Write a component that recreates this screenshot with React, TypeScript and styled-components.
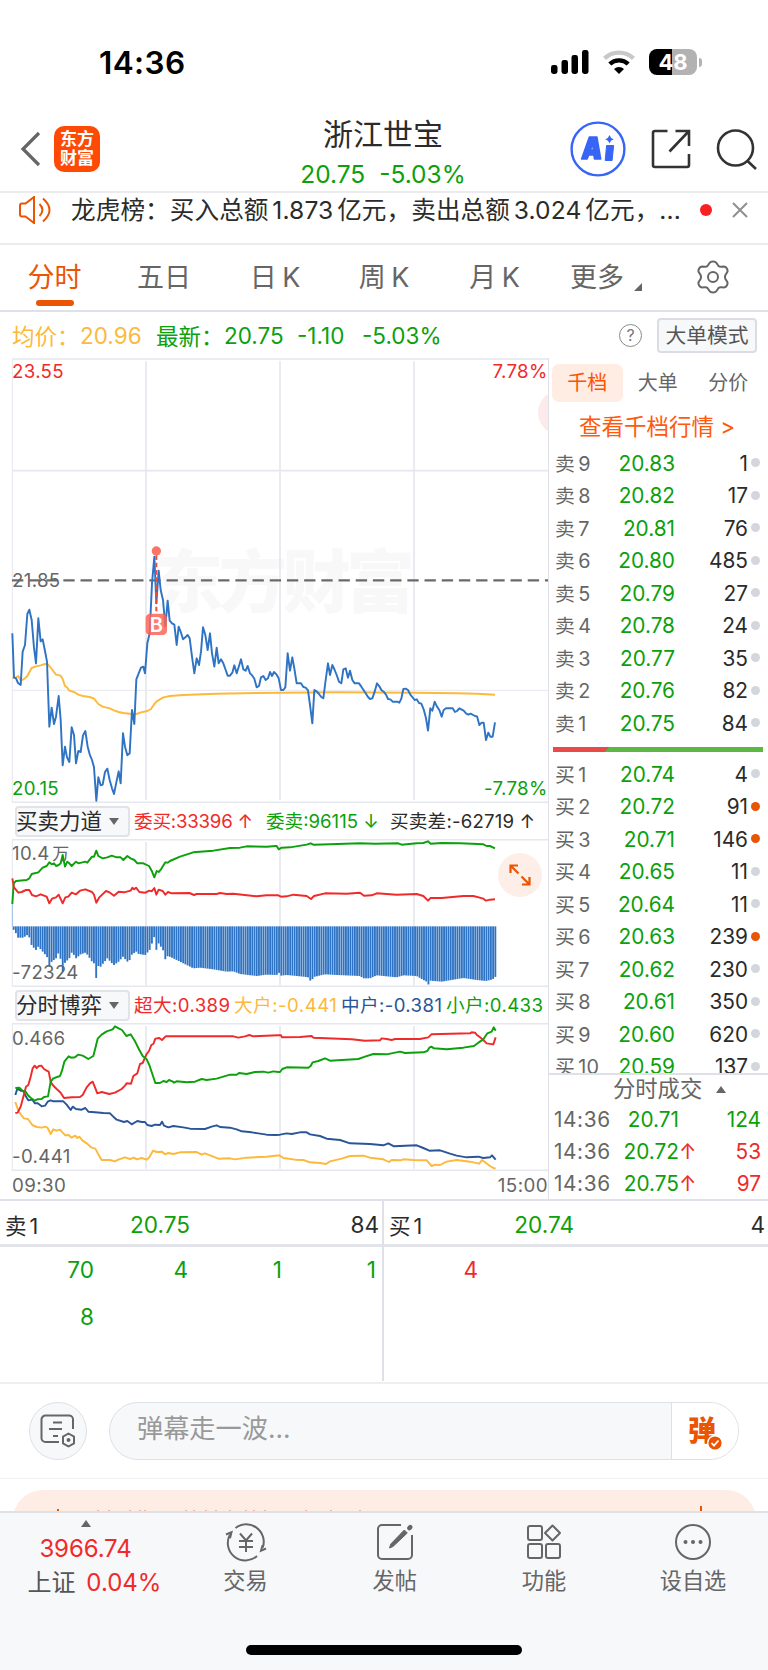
import React from "react";
import styled, { createGlobalStyle } from "styled-components";

const RED = "#f02a2a";
const GREEN = "#0ca00c";
const ORANGE = "#ea5504";
const AMBER = "#fcb93c";
const NAVY = "#2a5597";
const BLUE = "#2f74c4";
const INK = "#2b2b2b";
const GREY = "#666666";
const LINE = "#dfe0e8";

const Global = createGlobalStyle`
  * { box-sizing: border-box; }
  body { margin: 0; background: #fff; }
  svg { display: block; flex: none; }
`;

const Screen = styled.div`
  width: 768px;
  height: 1670px;
  overflow: hidden;
  display: flex;
  flex-direction: column;
  background: #fff;
  color: ${INK};
  font-family: Inter, "Noto Sans CJK SC", sans-serif;
  white-space: nowrap;
`;

/* ---------- status bar ---------- */

const StatusBar = styled.div`
  height: 106px;
  padding: 43px 66px 0 99px;
  display: flex;
  justify-content: space-between;
  align-items: flex-start;
`;
const Clock = styled.div`
  font-size: 31.5px;
  line-height: 40px;
  font-weight: 600;
  color: #000;
  letter-spacing: 0.4px;
`;
const StatusIcons = styled.div`
  display: flex;
  align-items: center;
  gap: 14px;
  height: 38px;
`;
const Battery = styled.div`
  display: flex;
  align-items: center;
  gap: 2px;
`;
const BatteryBody = styled.div`
  width: 48px;
  height: 26px;
  border-radius: 8px;
  background: linear-gradient(90deg, #000 48%, #b2b2b2 48%);
  color: #fff;
  font-size: 22px;
  font-weight: 700;
  line-height: 26px;
  text-align: center;
`;
const BatteryNub = styled.div`
  width: 3px;
  height: 9px;
  border-radius: 0 3px 3px 0;
  background: #b2b2b2;
`;

/* ---------- header ---------- */

const Header = styled.header`
  height: 87px;
  display: grid;
  grid-template-columns: 283px 200px 1fr;
  grid-template-rows: 85px;
  border-bottom: 2px solid #ececee;
`;
const HeaderLeft = styled.div`
  display: flex;
  align-items: center;
  padding-left: 20px;
  gap: 13px;
`;
const Logo = styled.div`
  width: 46px;
  height: 46px;
  border-radius: 10px;
  background: #ff4a05;
  color: #fff;
  font-size: 17px;
  line-height: 19px;
  font-weight: 700;
  text-align: center;
  padding-top: 4px;
`;
const HeaderTitle = styled.div`
  display: flex;
  flex-direction: column;
  align-items: center;
`;
const StockName = styled.div`
  margin-top: 8px;
  font-size: 30px;
  line-height: 40px;
`;
const StockQuote = styled.div`
  font-size: 24.5px;
  line-height: 40px;
  color: ${GREEN};
  word-spacing: 7px;
`;
const HeaderRight = styled.div`
  display: flex;
  align-items: center;
  padding-left: 87px;
`;
const ShareIcon = styled.svg`
  margin-left: 24.5px;
`;
const SearchIcon = styled.svg`
  margin-left: 25px;
`;

/* ---------- ticker ---------- */

const Ticker = styled.div`
  height: 52px;
  padding: 0 19px 17px;
  display: flex;
  align-items: center;
  border-bottom: 2px solid #ececee;
`;
const TickerText = styled.div`
  width: 629px;
  flex: none;
  margin-left: 19px;
  font-size: 24.6px;
  line-height: 30px;
  letter-spacing: 0.1px;
  word-spacing: -3.2px;
`;
const TickerDot = styled.i`
  flex: none;
  width: 12px;
  height: 12px;
  border-radius: 50%;
  background: #f82020;
  margin-right: 20px;
`;

/* ---------- period tabs ---------- */

const Tabs = styled.nav`
  height: 67px;
  display: flex;
  border-bottom: 2px solid ${LINE};
`;
const Tab = styled.div<{ $w: number; $active?: boolean }>`
  width: ${(p) => p.$w}px;
  height: 65px;
  display: flex;
  flex-direction: column;
  align-items: center;
  padding-top: 13px;
  font-size: 27px;
  line-height: 40px;
  color: ${(p) => (p.$active ? ORANGE : GREY)};
  word-spacing: -2px;
  &::after {
    content: "";
    display: ${(p) => (p.$active ? "block" : "none")};
    width: 38px;
    height: 6px;
    margin-top: 2px;
    border-radius: 3px;
    background: ${ORANGE};
  }
`;
const MoreTab = styled.div`
  width: 113px;
  display: flex;
  align-items: flex-start;
  padding: 13px 0 0 18px;
  gap: 10px;
  font-size: 27px;
  line-height: 40px;
  color: ${GREY};
`;
const Corner = styled.i`
  width: 0;
  height: 0;
  margin-top: 25px;
  border-left: 8px solid transparent;
  border-bottom: 8px solid ${GREY};
`;
const GearBox = styled.div`
  padding: 15px 0 0 32px;
`;

/* ---------- price summary ---------- */

const Summary = styled.div`
  height: 46px;
  padding: 0 11px 0 12px;
  display: flex;
  align-items: center;
  font-size: 22.5px;
  color: ${GREEN};
`;
const SummaryItem = styled.span<{ $w: number; $color?: string }>`
  width: ${(p) => p.$w}px;
  color: ${(p) => p.$color ?? GREEN};
`;
const Help = styled.div`
  width: 23px;
  height: 23px;
  border: 1.5px solid #8a8a8a;
  border-radius: 50%;
  margin-left: auto;
  font-size: 16px;
  line-height: 20px;
  text-align: center;
  color: #777;
`;
const ModeButton = styled.div`
  width: 100px;
  height: 35px;
  margin-left: 15px;
  border: 2px solid #dcdde4;
  border-radius: 4px;
  background: #f7f8fa;
  color: #555;
  font-size: 20.8px;
  line-height: 31px;
  text-align: center;
`;

/* ---------- main area ---------- */

const Main = styled.div`
  height: 843px;
  display: grid;
  grid-template-columns: 548px 220px;
  border-bottom: 2px solid ${LINE};
`;
const ChartColumn = styled.div`
  display: flex;
  flex-direction: column;
`;
const ChartFrame = styled.div`
  position: relative;
`;
const ExpandButton = styled.div`
  position: absolute;
  left: 498px;
  top: 14px;
  width: 44px;
  height: 44px;
  border-radius: 50%;
  background: #fdeee7;
  display: grid;
  place-items: center;
`;
const IndicatorRow = styled.div`
  height: 36px;
  padding-left: 15px;
  display: flex;
  align-items: center;
`;
const IndicatorPicker = styled.div`
  width: 115px;
  height: 31px;
  border: 2px solid #e1e3e8;
  border-radius: 4px;
  background: #f7f8fa;
  font-size: 21.5px;
  line-height: 27px;
  display: flex;
  align-items: center;
  justify-content: space-between;
  padding-right: 9px;
  margin-right: 4px;
  text-indent: -1px;
`;
const Caret = styled.i<{ $up?: boolean }>`
  width: 0;
  height: 0;
  border: 5px solid transparent;
  border-${(p) => (p.$up ? "bottom" : "top")}: 7px solid ${GREY};
  border-${(p) => (p.$up ? "top" : "bottom")}: 0;
`;
const Legend = styled.span<{ $w: number; $color: string; $track?: number }>`
  width: ${(p) => p.$w}px;
  font-size: 18.6px;
  line-height: 30px;
  color: ${(p) => p.$color};
  letter-spacing: ${(p) => p.$track ?? 0}px;
`;
const TimeAxis = styled.div`
  height: 29px;
  padding: 0 0 0 12px;
  display: flex;
  align-items: center;
  justify-content: space-between;
  font-size: 18.8px;
  letter-spacing: 0.4px;
  color: ${GREY};
`;

/* ---------- order book ---------- */

const Book = styled.aside`
  border-left: 1px solid ${LINE};
  display: flex;
  flex-direction: column;
  height: 841px;
`;
const BookTabs = styled.div`
  height: 50px;
  padding: 6px 0 0 3px;
  display: flex;
`;
const BookTab = styled.div<{ $active?: boolean }>`
  width: 70.5px;
  height: 38px;
  border-radius: 7px;
  font-size: 20px;
  line-height: 38px;
  text-align: center;
  background: ${(p) => (p.$active ? "#ffece3" : "transparent")};
  color: ${(p) => (p.$active ? "#ff5200" : GREY)};
`;
const BookLink = styled.div`
  height: 41.5px;
  padding-left: 30px;
  font-size: 22.5px;
  line-height: 39px;
  color: #ff5a0c;
`;
const BookRows = styled.div<{ $h: number }>`
  height: ${(p) => p.$h}px;
  flex: none;
  overflow: hidden;
`;
const BookRow = styled.div`
  height: 32.5px;
  padding: 0 8px 0 6px;
  display: flex;
  align-items: center;
  font-size: 20.8px;
  line-height: 32px;
`;
const Level = styled.span`
  width: 50px;
  font-size: 19.8px;
  color: ${GREY};
  word-spacing: -2px;
`;
const Price = styled.span`
  width: 70px;
  text-align: right;
  color: ${GREEN};
`;
const Volume = styled.span`
  flex: 1;
  text-align: right;
`;
const Mark = styled.i<{ $hot?: boolean }>`
  width: 9px;
  height: 9px;
  margin: 0 0 2px 3px;
  border-radius: 50%;
  background: ${(p) => (p.$hot ? ORANGE : "#d3d6dc")};
`;
const Balance = styled.div`
  height: 18.5px;
  padding: 6.5px 5px 0 4px;
`;
const BalanceBar = styled.div`
  height: 5px;
  background: linear-gradient(135deg, #e84949 0 40px, #5cb842 40px);
`;
const DealsTitle = styled.div`
  height: 31px;
  flex: none;
  border-top: 2px solid ${LINE};
  padding-left: 64px;
  display: flex;
  align-items: center;
  gap: 14px;
  font-size: 22.3px;
  line-height: 28px;
  color: ${GREY};
`;
const DealRow = styled.div`
  height: 31.8px;
  flex: none;
  padding: 0 7px 0 5px;
  display: flex;
  align-items: center;
  font-size: 20.8px;
`;
const DealTime = styled.span`
  width: 57px;
  color: ${GREY};
  letter-spacing: 0.6px;
`;
const DealPrice = styled.span`
  width: 68px;
  text-align: right;
  color: ${GREEN};
`;
const DealArrow = styled.span`
  width: 16px;
  color: ${RED};
`;
const DealVolume = styled.span<{ $up?: boolean }>`
  flex: 1;
  text-align: right;
  color: ${(p) => (p.$up ? RED : GREEN)};
`;

/* ---------- order queue ---------- */

const Queue = styled.section`
  height: 183px;
  display: grid;
  grid-template-columns: 384px 384px;
  border-bottom: 2px solid #efeff2;
`;
const QueueSide = styled.div<{ $divided?: boolean }>`
  height: 180px;
  border-right: ${(p) => (p.$divided ? `2px solid ${LINE}` : "none")};
`;
const QueueHead = styled.div`
  height: 46px;
  padding: 3px 3px 0 5px;
  display: flex;
  align-items: center;
  border-bottom: 3px solid #e3e4e9;
  font-size: 22.6px;
`;
const QueuePrice = styled.span`
  margin-left: 92px;
  width: 61px;
  text-align: right;
  color: ${GREEN};
`;
const QueueLevel = styled.span`
  width: 32px;
  font-size: 21.5px;
  word-spacing: -3px;
`;
const QueueTotal = styled.span`
  flex: 1;
  text-align: right;
`;
const QueueGrid = styled.div<{ $color: string }>`
  display: grid;
  grid-template-columns: repeat(4, 94px);
  grid-auto-rows: 46.5px;
  font-size: 22.6px;
  line-height: 46px;
  text-align: right;
  color: ${(p) => p.$color};
`;

/* ---------- comment bar and card ---------- */

const CommentBar = styled.div`
  height: 95px;
  padding: 18px 29px 0;
  display: flex;
  gap: 22px;
  border-bottom: 1px solid #f0f0f2;
`;
const RoundButton = styled.div`
  width: 58px;
  height: 58px;
  border: 1.5px solid #dfe1e7;
  border-radius: 50%;
  background: #f7f8fa;
  display: grid;
  place-items: center;
`;
const CommentField = styled.div`
  width: 630px;
  height: 58px;
  border: 1.5px solid #dfe1e7;
  border-radius: 29px;
  background: #f7f8fa;
  display: flex;
  overflow: hidden;
  font-size: 26.2px;
  line-height: 51px;
  color: #999;
`;
const Placeholder = styled.div`
  width: 561px;
  padding-left: 27px;
`;
const BarrageButton = styled.div`
  flex: 1;
  background: #fff;
  border-left: 1.5px solid #dfe1e7;
  display: flex;
  align-items: center;
  padding-left: 16px;
  color: ${ORANGE};
  font-size: 28px;
  font-weight: 900;
`;
const BarrageGlyph = styled.span`
  position: relative;
  line-height: 40px;
`;
const CheckBadge = styled.svg`
  position: absolute;
  right: -7px;
  bottom: 0;
`;
const CardClip = styled.div`
  height: 32px;
  flex: none;
  padding: 11px 12px 0 13px;
  overflow: hidden;
`;
const Card = styled.div`
  height: 80px;
  border-radius: 30px;
  background: #fdede4;
  padding: 16px 0 0 43px;
`;

/* ---------- bottom bar ---------- */

const BottomBar = styled.footer`
  flex: 1;
  background: #f7f8fa;
  border-top: 2px solid ${LINE};
  display: flex;
  flex-direction: column;
  align-items: center;
`;
const BottomItems = styled.div`
  width: 768px;
  height: 132px;
  display: grid;
  grid-template-columns: 171px 149px 149.500px 149px 149px;
`;
const IndexBox = styled.div`
  display: flex;
  flex-direction: column;
  align-items: center;
  padding-top: 7px;
  font-size: 24px;
  color: ${RED};
`;
const IndexValue = styled.div`
  margin-top: 5px;
  line-height: 34px;
  letter-spacing: -0.1px;
`;
const IndexChange = styled.div`
  line-height: 33px;
  margin-left: 18px;
  word-spacing: 4px;
`;
const IndexName = styled.span`
  color: #555;
`;
const BottomItem = styled.div`
  display: flex;
  flex-direction: column;
  align-items: center;
  padding-top: 9px;
  font-size: 22.2px;
  line-height: 32px;
  color: ${GREY};
  gap: 3px;
`;
const HomeIndicator = styled.div`
  width: 276px;
  height: 10px;
  border-radius: 5px;
  background: #000;
`;

/* ---------- chart data: x/y pairs, three units to a pixel ---------- */

const AFTERNOON = 810;
const path = (morning: string, afternoon: string) => {
  const late = afternoon.split(" ").map((p) => {
    const [x, y] = p.split(",");
    return `${Number(x) + AFTERNOON},${y}`;
  });
  return `${morning} ${late.join(" ")}`;
};

const price = path(
  "37,850 42,982 48,985 54,999 62,1005 68,905 75,885 82,792 88,779 95,810 102,893 108,940 115,805 122,874 128,868 135,903 141,935 148,1130 155,1073 162,1122 168,1100 176,1038 182,1110 188,1246 195,1190 201,1222 208,1236 215,1132 222,1155 228,1240 235,1203 242,1206 249,1156 256,1143 263,1190 269,1213 276,1230 282,1252 289,1352 295,1282 302,1306 308,1304 315,1266 322,1256 329,1290 336,1315 342,1332 349,1297 356,1264 362,1300 369,1150 375,1190 382,1216 389,1210 396,1080 403,1122 409,988 416,970 423,953 430,950 435,970 442,880 449,850 456,700 463,620 469,760 476,662 482,720 489,750 496,830 503,752 509,812 516,820 523,824 530,885 536,830 543,848 549,868 556,862 563,855 569,865 576,920 583,970 590,925 597,945 603,905 609,832 616,855 623,900 630,850 636,910 643,950 650,893 656,940 663,928 670,940 676,957 683,977 690,977 697,968 703,946 710,970 717,948 723,928 730,958 737,962 743,948 750,970 757,977 763,986 770,1012 777,1008 783,982 790,978 797,990 804,985",
  "0,966 6,978 12,966 20,974 26,985 33,1020 40,1020 46,1012 53,910 60,962 67,922 73,955 80,1000 93,1000 100,1011 107,1013 114,1021 120,1065 127,1120 133,1020 140,1024 147,1032 153,1040 160,1045 167,990 174,940 180,975 187,945 194,960 200,975 207,995 214,1000 220,958 227,955 234,983 240,962 247,990 254,1000 267,1000 274,1010 287,1030 294,1041 300,1047 307,1045 314,1025 321,1000 328,1009 334,1020 341,1025 348,1034 354,1047 361,1048 368,1055 382,1055 388,1058 394,1046 400,1017 407,1016 414,1020 421,1034 434,1050 440,1048 447,1059 454,1061 461,1078 468,1105 474,1142 481,1075 487,1082 494,1055 501,1070 508,1080 515,1100 521,1080 528,1075 548,1075 555,1086 561,1083 568,1075 581,1082 588,1090 595,1094 602,1091 615,1098 621,1099 628,1125 635,1118 641,1118 648,1170 655,1148 661,1160 668,1160 675,1117"
);
const average = path(
  "37,982 42,984 48,982 55,978 62,992 75,985 82,978 95,954 108,949 122,946 135,942 143,942 155,957 168,974 182,977 188,987 195,1008 202,1013 208,1022 222,1026 235,1034 249,1038 269,1041 282,1046 295,1062 308,1070 329,1075 342,1081 356,1086 370,1089 396,1092 409,1092 423,1087 442,1083 453,1077 463,1062 470,1054 480,1048 490,1042 510,1038 550,1035 650,1031 840,1028",
  "200,1027 440,1028 560,1030 620,1031 675,1034"
);
const asks = path(
  "37,312 41,250 48,243 80,240 88,235 95,222 115,217 128,203 140,198 148,187 155,193 162,190 168,198 176,195 182,190 188,165 195,200 202,185 208,190 215,198 228,185 235,190 256,185 262,188 276,170 282,170 289,152 295,168 308,175 322,172 335,167 350,172 362,172 370,180 382,168 392,175 403,180 412,190 430,190 447,198 455,212 463,232 470,213 476,216 483,208 496,187 503,188 510,183 540,170 580,157 600,155 640,152 690,144 720,143 740,139 800,140 827,138",
  "20,138 26,148 35,143 60,142 110,134 122,130 130,134 180,133 270,130 315,131 385,130 395,134 440,130 460,129 474,124 482,131 515,129 570,130 640,133 650,138 660,138 675,145"
);
const bids = path(
  "37,235 42,262 55,278 65,276 78,270 88,270 96,285 108,289 122,283 140,290 148,310 156,296 168,292 176,284 188,310 196,292 205,290 215,278 228,283 240,272 256,268 276,276 282,284 289,308 298,292 318,273 330,278 342,287 356,275 372,277 392,272 397,263 402,268 408,263 418,276 436,278 448,272 455,274 463,264 469,284 476,269 488,273 496,284 504,276 515,280 568,279 582,285 590,282 650,282 660,279 680,282 700,281 770,289 800,286",
  "25,286 33,290 50,289 70,284 110,288 123,297 132,288 165,280 230,281 270,278 282,287 305,286 320,280 380,284 440,282 460,288 474,302 482,294 515,294 580,288 610,288 640,296 648,302 660,299 675,298"
);
const spread = path(
  "40,388 47,398 54,413 70,413 82,405 90,415 95,437 108,450 115,440 128,455 141,470 148,500 155,485 168,475 176,458 182,478 188,517 195,488 208,475 215,458 222,465 228,475 242,463 256,458 263,465 276,485 282,490 289,537 295,498 302,500 308,492 322,475 336,490 342,495 356,485 369,470 382,485 389,480 396,463 409,455 416,462 436,465 449,450 456,430 463,410 469,450 476,430 489,450 496,478 503,468 516,473 540,485 570,500 580,505 600,503 640,508 680,515 700,514 720,522 770,528 800,524",
  "20,525 26,517 33,527 50,525 100,530 114,532 123,545 131,531 165,523 200,525 270,528 280,535 300,535 320,526 380,532 400,526 440,528 460,540 468,543 474,556 481,542 515,545 580,534 620,540 648,543 668,538 677,530"
);
const gameSuper = path(
  "46,939 53,938 62,920 70,890 78,860 85,855 92,830 98,805 104,797 110,804 117,798 124,797 132,807 140,812 146,815 152,845 158,855 170,867 182,878 192,894 215,892 240,891 248,885 260,862 270,850 278,845 285,862 292,880 305,876 328,882 345,878 365,867 375,857 380,850 393,851 400,828 412,820 420,792 428,789 434,775 440,762 447,753 454,735 460,732 466,716 478,714 486,720 497,709 700,709 715,713 735,709 748,705 760,709",
  "25,706 33,706 36,712 90,711 125,708 130,713 245,718 285,722 330,721 335,715 350,717 365,720 375,717 450,717 475,712 484,703 600,700 605,697 615,698 620,704 630,712 640,720 650,730 670,733 677,712"
);
const gameSmall = path(
  "46,864 58,863 68,873 77,875 84,886 92,893 104,902 112,898 125,897 132,891 144,889 152,845 160,835 180,828 186,812 193,785 206,769 213,773 225,772 234,764 248,767 265,777 280,768 286,745 293,716 305,704 320,694 338,688 345,679 356,685 366,690 379,708 392,703 404,722 418,750 428,768 440,778 448,795 466,849 480,849 490,843 500,846 507,840 517,844 522,848 530,844 560,847 585,845 605,837 620,840 650,836 690,824 710,824 717,819 740,822 765,816 790,815 805,818 820,814",
  "25,816 30,816 37,807 50,802 115,803 122,798 128,787 145,783 165,775 180,782 265,777 285,770 310,762 350,763 390,755 405,759 460,757 472,753 478,743 484,740 492,745 530,748 580,743 612,738 625,728 640,718 652,700 665,695 671,682 677,692"
);
const gameMid = path(
  "46,885 52,866 62,872 70,873 77,888 85,901 97,899 105,910 113,910 125,919 135,917 143,905 152,901 160,904 190,904 200,914 212,930 218,920 228,927 245,929 256,924 265,935 285,937 310,939 330,940 340,950 350,959 372,966 382,963 395,973 412,963 425,966 435,966 442,975 455,978 465,974 480,975 486,965 492,977 505,982 520,978 550,982 570,986 615,987 635,980 650,976 660,981 690,983 710,988 725,994 755,997 775,1000 800,1004 825,1005",
  "30,1004 50,1000 65,1002 90,997 110,997 120,1003 150,1008 170,1016 210,1020 240,1030 300,1032 340,1036 355,1030 372,1039 440,1036 460,1044 478,1052 510,1051 540,1061 560,1067 590,1072 625,1070 640,1074 660,1072 666,1066 677,1079"
);
const gameLarge = path(
  "46,906 55,932 62,943 72,955 84,957 97,975 110,981 125,983 138,980 143,984 152,1002 160,988 170,992 180,989 188,998 196,1006 206,1005 214,1013 226,1007 232,1014 238,1010 247,1021 260,1030 275,1043 286,1046 294,1061 305,1080 330,1080 345,1084 355,1079 375,1072 390,1077 402,1073 410,1078 425,1074 440,1079 448,1072 459,1052 470,1056 486,1055 495,1063 505,1059 520,1062 540,1057 590,1056 605,1064 615,1060 655,1076 690,1075 705,1078 740,1073 800,1070",
  "28,1066 40,1074 75,1079 100,1080 120,1087 150,1089 168,1092 180,1084 215,1076 240,1068 280,1067 300,1073 340,1078 357,1086 365,1080 390,1081 400,1078 430,1080 470,1081 485,1098 495,1094 510,1095 530,1085 560,1080 600,1085 628,1091 636,1080 660,1098 670,1104 677,1106"
);

const spreadPoints = spread.split(" ").map((p) => p.split(",").map(Number));
const depthAt = (x: number) => {
  const i = Math.max(1, spreadPoints.findIndex((p) => p[0] >= x));
  const [x0, y0] = spreadPoints[i - 1];
  const [x1, y1] = spreadPoints[i];
  return y0 + ((y1 - y0) * (x - x0)) / (x1 - x0);
};
const bars = Array.from({ length: 217 }, (_, i) => 41 + i * 6.69);

const Curve = styled.polyline`
  fill: none;
  stroke-width: 5.8;
  stroke-linejoin: round;
`;
const Grid = styled.path`
  fill: none;
  stroke: #e6e8ef;
  stroke-width: 5;
`;
const AxisText = styled.text`
  font-size: 56px;
  letter-spacing: 1px;
`;

const PriceChart = () => (
  <svg width="548" height="445" viewBox="0 24 1644 1335">
    <text x="464" y="771" fontSize="205" fontWeight="900" fill="#f8f8f8" textLength="780">东方财富</text>
    <circle cx="1680" cy="188" r="66" fill="#fdeaea" />
    <Grid d="M36 27H1644M36 362H1644M36 1357H1644M438 34V1350M840 34V1350M1242 34V1350" />
    <path d="M36 1021H1644M37 27V1357" stroke="#e6e8ef" strokeWidth="3" />
    <path d="M36 691H180M190 691H1644" stroke="#6a6a6a" strokeWidth="7" strokeDasharray="34 17.6" />
    <Curve points={average} stroke={AMBER} />
    <Curve points={price} stroke={BLUE} />
    <AxisText x="36" y="84" fill={RED}>23.55</AxisText>
    <AxisText x="36" y="710" fill={GREY}>21.85</AxisText>
    <AxisText x="36" y="1334" fill={GREEN}>20.15</AxisText>
    <AxisText x="1643" y="84" fill={RED} textAnchor="end">7.78%</AxisText>
    <AxisText x="1643" y="1334" fill={GREEN} textAnchor="end">-7.78%</AxisText>
    <path d="M469 616V792" stroke="#f0493e" strokeWidth="6" strokeDasharray="14 8" />
    <circle cx="469" cy="603" r="14" fill="#fb7466" />
    <rect x="437" y="791" width="64" height="64" rx="13" fill="#fb6355" fillOpacity=".84" />
    <text x="469" y="845" fontSize="60" fontWeight="600" fill="#fff" textAnchor="middle">B</text>
  </svg>
);

const ForceChart = () => (
  <svg width="548" height="148" viewBox="0 117 1644 444">
    <Grid d="M36 119H1644M36 559H1644M438 126V556M840 126V556M1242 126V556" />
    <path d="M37 119V559" stroke="#e6e8ef" strokeWidth="3" />
    <path d="M37 300V379" stroke="#9dbfe6" strokeWidth="3" />
    {bars.map((x) => (
      <rect key={x} x={x - 2.8} y="379" width="5.6" height={depthAt(x) - 379} fill={BLUE} />
    ))}
    <AxisText x="36" y="181" fill={GREY}>
      10.4<tspan dx="8" fontSize="51">万</tspan>
    </AxisText>
    <AxisText x="36" y="536" fill={GREY}>-72324</AxisText>
    <Curve points={asks} stroke={GREEN} />
    <Curve points={bids} stroke={RED} />
  </svg>
);

const GameChart = () => (
  <svg width="548" height="148" viewBox="0 669 1644 444">
    <Grid d="M36 671H1644M36 1111H1644M438 678V1106M840 678V1106M1242 678V1106" />
    <path d="M37 671V1112" stroke="#e6e8ef" strokeWidth="3" />
    <AxisText x="36" y="734" fill={GREY}>0.466</AxisText>
    <AxisText x="36" y="1089" fill={GREY}>-0.441</AxisText>
    <Curve points={gameLarge} stroke={AMBER} />
    <Curve points={gameMid} stroke={NAVY} />
    <Curve points={gameSuper} stroke={RED} />
    <Curve points={gameSmall} stroke={GREEN} />
  </svg>
);

const sells: [string, string, string][] = [
  ["卖 9", "20.83", "1"],
  ["卖 8", "20.82", "17"],
  ["卖 7", "20.81", "76"],
  ["卖 6", "20.80", "485"],
  ["卖 5", "20.79", "27"],
  ["卖 4", "20.78", "24"],
  ["卖 3", "20.77", "35"],
  ["卖 2", "20.76", "82"],
  ["卖 1", "20.75", "84"],
];
const buys: [string, string, string, boolean?][] = [
  ["买 1", "20.74", "4"],
  ["买 2", "20.72", "91", true],
  ["买 3", "20.71", "146", true],
  ["买 4", "20.65", "11"],
  ["买 5", "20.64", "11"],
  ["买 6", "20.63", "239", true],
  ["买 7", "20.62", "230"],
  ["买 8", "20.61", "350"],
  ["买 9", "20.60", "620"],
  ["买 10", "20.59", "137"],
];

const BookLine = ({ row }: { row: [string, string, string, boolean?] }) => (
  <BookRow>
    <Level>{row[0]}</Level>
    <Price>{row[1]}</Price>
    <Volume>{row[2]}</Volume>
    <Mark $hot={row[3]} />
  </BookRow>
);

export default function App() {
  return (
    <Screen>
      <Global />
      <StatusBar>
        <Clock>14:36</Clock>
        <StatusIcons>
          <svg width="38" height="24" viewBox="0 0 38 24">
            <rect x="0" y="15" width="6.5" height="9" rx="2.4" />
            <rect x="10.5" y="10" width="6.5" height="14" rx="2.4" />
            <rect x="20.5" y="5" width="6.5" height="19" rx="2.4" />
            <rect x="31" y="0" width="6.5" height="24" rx="2.4" />
          </svg>
          <svg width="32" height="24" viewBox="0 0 32 24" fill="none">
            <path d="M1.5 8.4a21 21 0 0 1 29 0" stroke="#c8c8c8" strokeWidth="4.4" />
            <path d="M6.8 14a13.4 13.4 0 0 1 18.4 0" stroke="#000" strokeWidth="4.4" />
            <path d="M16 24l-5-5.1a7.3 7.3 0 0 1 10 0z" fill="#000" />
          </svg>
          <Battery>
            <BatteryBody>48</BatteryBody>
            <BatteryNub />
          </Battery>
        </StatusIcons>
      </StatusBar>

      <Header>
        <HeaderLeft>
          <svg width="21" height="36" viewBox="0 0 21 36" fill="none" stroke="#666" strokeWidth="3.2">
            <path d="M19 2L3 18l16 16" />
          </svg>
          <Logo>
            东方
            <br />
            财富
          </Logo>
        </HeaderLeft>
        <HeaderTitle>
          <StockName>浙江世宝</StockName>
          <StockQuote>20.75 -5.03%</StockQuote>
        </HeaderTitle>
        <HeaderRight>
          <svg width="56" height="56" viewBox="0 0 56 56" fill="#3765f6">
            <circle cx="28" cy="28" r="26.4" fill="none" stroke="#3765f6" strokeWidth="2.4" />
            <path
              fillRule="evenodd"
              stroke="#3765f6"
              strokeWidth="1.4"
              strokeLinejoin="round"
              d="M19.3 16H27l3.8 22h-6.4l-.6-4h-5.1l-1.5 4H11.5zM22.500 22.500L20.600 29h2.700z"
            />
            <path d="M36.600 24.500h7l-1.500 15h-6.900z" stroke="#3765f6" strokeWidth="1" strokeLinejoin="round" />
            <path d="M39.500 14q.9 3.300 4.200 4.200q-3.300.9-4.200 4.200q-.9-3.300-4.200-4.200q3.300-.9 4.200-4.200z" />
          </svg>
          <ShareIcon width="40" height="40" viewBox="0 0 40 40" fill="none" stroke="#333" strokeWidth="2.6">
            <path d="M16.500 2H4a2 2 0 0 0-2 2V36a2 2 0 0 0 2 2H36a2 2 0 0 0 2-2V25M24.500 2H38V17M37.500 2.500L18.500 22.500" />
          </ShareIcon>
          <SearchIcon width="42" height="42" viewBox="0 0 42 42" fill="none" stroke="#333" strokeWidth="2.6">
            <circle cx="19.5" cy="20" r="17.5" />
            <path d="M31 32.500l9 8.500" />
          </SearchIcon>
        </HeaderRight>
      </Header>

      <Ticker>
        <svg width="33" height="28" viewBox="0 0 33 28" fill="none" stroke={ORANGE} strokeWidth="2">
          <path d="M6.500 7.500H3a2 2 0 0 0-2 2v9a2 2 0 0 0 2 2h3.500L15 27V1zM20.500 8q6 6 0 12M24 2.500q13 11.500 0 23" />
        </svg>
        <TickerText>龙虎榜：买入总额 1.873 亿元，卖出总额 3.024 亿元，...</TickerText>
        <TickerDot />
        <svg width="16" height="16" viewBox="0 0 16 16" stroke="#909090" strokeWidth="2">
          <path d="M1 1l14 14M15 1L1 15" />
        </svg>
      </Ticker>

      <Tabs>
        <Tab $w={109} $active>分时</Tab>
        <Tab $w={110}>五日</Tab>
        <Tab $w={112}>日 K</Tab>
        <Tab $w={106}>周 K</Tab>
        <Tab $w={115}>月 K</Tab>
        <MoreTab>
          更多
          <Corner />
        </MoreTab>
        <GearBox>
          <svg width="32" height="34" viewBox="0 0 32 34" fill="none" stroke={GREY} strokeWidth="2">
            <path
              strokeLinejoin="round"
              d="M12.500 3q1-1.500 3.500-1.500T19.500 3l2 3q1 1 3 .8l2.500-.2q2 .2 3 2.200t.3 3.200l-2 3.300q-.6 1.700 0 3.400l2 3.300q.7 1.200-.3 3.200t-3 2.200l-2.500-.2q-2-.2-3 .8l-2 3q-1 1.500-3.500 1.500T12.500 31l-2-3q-1-1-3-.8L5 27.400q-2-.2-3-2.200T1.700 22l2-3.300q.6-1.700 0-3.400l-2-3.300Q1 10.800 2 8.800T5 6.600l2.500.2q2 .2 3-.8z"
            />
            <circle cx="16" cy="17" r="5" />
          </svg>
        </GearBox>
      </Tabs>

      <Summary>
        <SummaryItem $w={68} $color={AMBER}>均价：</SummaryItem>
        <SummaryItem $w={76} $color={AMBER}>20.96</SummaryItem>
        <SummaryItem $w={68}>最新：</SummaryItem>
        <SummaryItem $w={73}>20.75</SummaryItem>
        <SummaryItem $w={65}>-1.10</SummaryItem>
        <SummaryItem $w={85}>-5.03%</SummaryItem>
        <Help>?</Help>
        <ModeButton>大单模式</ModeButton>
      </Summary>

      <Main>
        <ChartColumn>
          <PriceChart />
          <IndicatorRow>
            <IndicatorPicker>
              买卖力道
              <Caret />
            </IndicatorPicker>
            <Legend $w={132} $color={RED} $track={-0.2}>委买:33396 ↑</Legend>
            <Legend $w={124} $color={GREEN}>委卖:96115 ↓</Legend>
            <Legend $w={154} $color={INK} $track={0.2}>买卖差:-62719 ↑</Legend>
          </IndicatorRow>
          <ChartFrame>
            <ForceChart />
            <ExpandButton>
              <svg width="22" height="22" viewBox="0 0 22 22" fill="none" stroke={ORANGE} strokeWidth="2.2">
                <path d="M1.500 9V1.500H9M1.500 1.500l8 8M20.500 13v7.500H13M20.500 20.500l-8-8" />
              </svg>
            </ExpandButton>
          </ChartFrame>
          <IndicatorRow>
            <IndicatorPicker>
              分时博弈
              <Caret />
            </IndicatorPicker>
            <Legend $w={100} $color={RED} $track={0.4}>超大:0.389</Legend>
            <Legend $w={107} $color={AMBER} $track={0.5}>大户:-0.441</Legend>
            <Legend $w={105} $color={NAVY} $track={0.4}>中户:-0.381</Legend>
            <Legend $w={100} $color={GREEN} $track={0.4}>小户:0.433</Legend>
          </IndicatorRow>
          <GameChart />
          <TimeAxis>
            <span>09:30</span>
            <span>15:00</span>
          </TimeAxis>
        </ChartColumn>

        <Book>
          <BookTabs>
            <BookTab $active>千档</BookTab>
            <BookTab>大单</BookTab>
            <BookTab>分价</BookTab>
          </BookTabs>
          <BookLink>查看千档行情 &gt;</BookLink>
          <BookRows $h={293}>
            {sells.map((r) => (
              <BookLine key={r[0]} row={r} />
            ))}
          </BookRows>
          <Balance>
            <BalanceBar />
          </Balance>
          <BookRows $h={314}>
            {buys.map((r) => (
              <BookLine key={r[0]} row={r} />
            ))}
          </BookRows>
          <DealsTitle>
            分时成交
            <Caret $up />
          </DealsTitle>
          <DealRow>
            <DealTime>14:36</DealTime>
            <DealPrice>20.71</DealPrice>
            <DealArrow />
            <DealVolume>124</DealVolume>
          </DealRow>
          <DealRow>
            <DealTime>14:36</DealTime>
            <DealPrice>20.72</DealPrice>
            <DealArrow>↑</DealArrow>
            <DealVolume $up>53</DealVolume>
          </DealRow>
          <DealRow>
            <DealTime>14:36</DealTime>
            <DealPrice>20.75</DealPrice>
            <DealArrow>↑</DealArrow>
            <DealVolume $up>97</DealVolume>
          </DealRow>
        </Book>
      </Main>

      <Queue>
        <QueueSide $divided>
          <QueueHead>
            <QueueLevel>卖 1</QueueLevel>
            <QueuePrice>20.75</QueuePrice>
            <QueueTotal>84</QueueTotal>
          </QueueHead>
          <QueueGrid $color={GREEN}>
            <span>70</span>
            <span>4</span>
            <span>1</span>
            <span>1</span>
            <span>8</span>
          </QueueGrid>
        </QueueSide>
        <QueueSide>
          <QueueHead>
            <QueueLevel>买 1</QueueLevel>
            <QueuePrice>20.74</QueuePrice>
            <QueueTotal>4</QueueTotal>
          </QueueHead>
          <QueueGrid $color={RED}>
            <span>4</span>
          </QueueGrid>
        </QueueSide>
      </Queue>

      <CommentBar>
        <RoundButton>
          <svg width="36" height="34" viewBox="0 0 36 34" fill="none" stroke={GREY} strokeWidth="2">
            <path d="M33 15V5.500a4 4 0 0 0-4-4H5.500a4 4 0 0 0-4 4V24a4 4 0 0 0 4 4H19M13 8.500h9M9 15h13M13 22h5" />
            <path d="M28.500 19.500l5.500 3.200v6.600l-5.500 3.200l-5.500-3.200v-6.600z" strokeLinejoin="round" />
            <circle cx="28.5" cy="26" r="1" fill={GREY} />
          </svg>
        </RoundButton>
        <CommentField>
          <Placeholder>弹幕走一波...</Placeholder>
          <BarrageButton>
            <BarrageGlyph>
              弹
              <CheckBadge width="16" height="16" viewBox="0 0 16 16">
                <circle cx="8" cy="8" r="7.3" fill={ORANGE} stroke="#fff" strokeWidth="1.4" />
                <path d="M4.500 8l2.500 2.700L11.500 5.500" fill="none" stroke="#fff" strokeWidth="1.8" />
              </CheckBadge>
            </BarrageGlyph>
          </BarrageButton>
        </CommentField>
      </CommentBar>
      <CardClip>
        <Card>
          <svg width="660" height="8" viewBox="0 0 660 8" fill="none" strokeWidth="2">
            <path d="M2 3V8M645 0V5" stroke={ORANGE} />
            <path d="M42 4v4M53 4v4M74 4v4M84 4v4M89 4v4M130 4v4M138 4v4M150 4v4M160 4v4M174 4v4M190 4v4M198 4v4M209 4v4M250 4v4M275 4v4M304 4v4" stroke="#f4b596" />
          </svg>
        </Card>
      </CardClip>

      <BottomBar>
        <BottomItems>
          <IndexBox>
            <Caret $up />
            <IndexValue>3966.74</IndexValue>
            <IndexChange>
              <IndexName>上证</IndexName> 0.04%
            </IndexChange>
          </IndexBox>
          <BottomItem>
            <svg width="42" height="40" viewBox="0 0 42 40" fill="none" stroke={GREY} strokeWidth="2">
              <path d="M10.500 6A17.500 17.500 0 0 1 37.800 25.500M32 34A17.500 17.500 0 0 1 5 12.500M1 12.500l5.500-2.300l-1.500 6M41 26.500l-5 2.300l1.600-5.500" />
              <path d="M15 11.500l6 7l6-7M14 19h14M14 25h14M21 19v11" />
            </svg>
            交易
          </BottomItem>
          <BottomItem>
            <svg width="38" height="40" viewBox="0 0 38 40" fill="none" stroke={GREY} strokeWidth="2">
              <path d="M25 3H6a4 4 0 0 0-4 4V33a4 4 0 0 0 4 4H32a4 4 0 0 0 4-4V13" />
              <path d="M28.300 8l3 3L17 24.500l-3.500 1.500l1.300-4z" fill={GREY} strokeWidth="1" strokeLinejoin="round" />
              <path d="M33.300 6.200l1-1" strokeWidth="4.5" strokeLinecap="round" />
            </svg>
            发帖
          </BottomItem>
          <BottomItem>
            <svg width="36" height="40" viewBox="0 0 36 40" fill="none" stroke={GREY} strokeWidth="2">
              <rect x="2" y="4" width="14" height="14" rx="2" />
              <rect x="2" y="22" width="14" height="14" rx="2" />
              <rect x="20" y="22" width="14" height="14" rx="2" />
              <path d="M26.500 3.500L34 11l-7.500 7.500L19 11z" strokeLinejoin="round" />
            </svg>
            功能
          </BottomItem>
          <BottomItem>
            <svg width="38" height="40" viewBox="0 0 38 40" fill={GREY}>
              <circle cx="19" cy="20" r="17" fill="none" stroke={GREY} strokeWidth="2" />
              <circle cx="11.5" cy="20" r="2" />
              <circle cx="19" cy="20" r="2" />
              <circle cx="26.5" cy="20" r="2" />
            </svg>
            设自选
          </BottomItem>
        </BottomItems>
        <HomeIndicator />
      </BottomBar>
    </Screen>
  );
}
